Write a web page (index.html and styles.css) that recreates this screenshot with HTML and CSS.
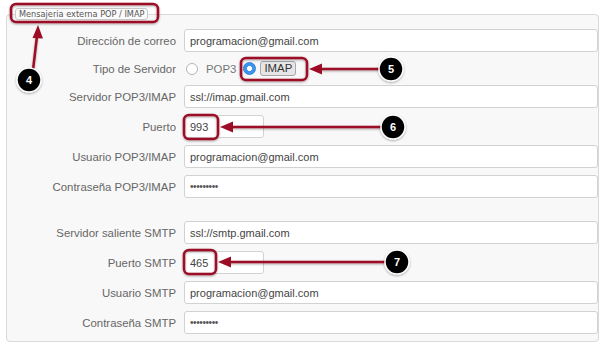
FILE: index.html
```html
<!DOCTYPE html>
<html lang="es">

<head>
    <meta charset="UTF-8">
    <meta name="viewport" content="width=device-width, initial-scale=1.0">
    <title>Mensajeria externa</title>
    <link rel="stylesheet" href="styles.css">
</head>

<body>
    <fieldset class="mail">
        <legend>Mensajeria externa POP / IMAP</legend>
        <div class="form">
            <label>Dirección de correo</label>
            <input type="text" value="programacion@gmail.com">

            <label class="radio-label">Tipo de Servidor</label>
            <div class="radios">
                <span class="radio"></span>
                <span class="opt">POP3</span>
                <span class="radio on"></span>
                <span class="opt sel">IMAP</span>
            </div>

            <label>Servidor POP3/IMAP</label>
            <input type="text" value="ssl://imap.gmail.com">

            <label>Puerto</label>
            <input type="text" class="short" value="993">

            <label>Usuario POP3/IMAP</label>
            <input type="text" value="programacion@gmail.com">

            <label>Contraseña POP3/IMAP</label>
            <input type="password" value="123456789">

            <div class="spacer"></div>

            <label>Servidor saliente SMTP</label>
            <input type="text" value="ssl://smtp.gmail.com">

            <label>Puerto SMTP</label>
            <input type="text" class="short" value="465">

            <label>Usuario SMTP</label>
            <input type="text" value="programacion@gmail.com">

            <label>Contraseña SMTP</label>
            <input type="password" value="123456789">
        </div>
    </fieldset>

    <!-- annotations -->
    <svg class="notes" width="600" height="347" viewBox="0 0 600 347">
        <defs>
            <filter id="sh" x="-20%" y="-20%" width="140%" height="140%">
                <feDropShadow dx="0" dy="1" stdDeviation="1" flood-color="#000" flood-opacity="0.35" />
            </filter>
        </defs>
        <g fill="none" stroke="#9c0d25" stroke-width="2.5" filter="url(#sh)">
            <rect x="11" y="4" width="147" height="18" rx="5" />
            <rect x="241" y="58" width="66" height="22" rx="5" />
            <rect x="184" y="115" width="34" height="24" rx="5" />
            <rect x="184" y="250" width="32" height="24" rx="5" />
            <line x1="33" y1="70" x2="37" y2="36" />
            <line x1="380" y1="69" x2="321" y2="69" />
            <line x1="382" y1="127" x2="231" y2="127" />
            <line x1="386" y1="262" x2="229" y2="262" />
        </g>
        <g fill="#9c0d25">
            <polygon points="38,25 32.5,38 43,38.5" />
            <polygon points="309,69 322,63.5 322,74.5" />
            <polygon points="220,127 233,121.5 233,132.5" />
            <polygon points="218,262 231,256.5 231,267.5" />
        </g>
        <g class="pin" filter="url(#sh)">
            <circle cx="29" cy="80" r="12" />
            <circle cx="391" cy="69" r="12" />
            <circle cx="393" cy="127" r="12" />
            <circle cx="397" cy="262" r="12" />
        </g>
        <g class="pin-num">
            <text x="29" y="84">4</text>
            <text x="391" y="73">5</text>
            <text x="393" y="131">6</text>
            <text x="397" y="266">7</text>
        </g>
    </svg>
</body>

</html>
```

FILE: styles.css
```css
body {
    margin: 0;
    background: #fff;
    font-family: "Liberation Sans", Arial, Helvetica, sans-serif;
    width: 600px;
    height: 347px;
    overflow: hidden;
    position: relative;
}

.mail {
    margin: 8px 0 0 6px;
    width: 592px;
    padding: 0 0 8px 0;
    border: 1px solid #d9d9d9;
    border-radius: 4px;
    background: #f8f8f8;
    box-sizing: border-box;
    height: 334px;
}

.mail>legend {
    margin-left: 8px;
    padding: 0 3px;
    height: 12px;
    line-height: 11px;
    box-sizing: border-box;
    font-family: "DejaVu Sans", Verdana, sans-serif;
    font-size: 8.2px;
    color: #555;
    background: #fbfbfb;
    border: 1px solid #c9c9c9;
    border-radius: 3px;
}

.form {
    display: grid;
    grid-template-columns: 169px 1fr;
    column-gap: 8px;
    row-gap: 7px;
    padding-top: 9px;
}

.form>label {
    align-self: center;
    text-align: right;
    font-size: 11.4px;
    color: #666;
}

.form>input {
    height: 23px;
    width: 414px;
    box-sizing: border-box;
    margin: 0;
    padding: 0 0 0 5px;
    border: 1px solid #d2d2d2;
    border-radius: 3px;
    background: #fff;
    font-family: "Liberation Sans", Arial, sans-serif;
    font-size: 11px;
    color: #444;
    outline: none;
}

.form>input.short {
    width: 80px;
}

.form>input[type="password"] {
    font-size: 10px;
    letter-spacing: -0.4px;
    color: #555;
}

.spacer {
    grid-column: 1 / -1;
    height: 9px;
}

.radios {
    height: 19px;
    display: flex;
    align-items: center;
    padding-left: 2px;
}

.radio {
    width: 12px;
    height: 12px;
    box-sizing: border-box;
    border: 1px solid #b5b5b5;
    border-radius: 50%;
    background: #fff;
    margin-right: 8px;
}

.radio.on {
    width: 13px;
    height: 13px;
    border: 1px solid #2f7fd8;
    background: radial-gradient(circle, #fff 0 2.2px, #3d94ee 2.8px);
    margin-right: 4px;
}

.opt {
    font-size: 11.4px;
    color: #777;
    margin-right: 7px;
}

.opt.sel {
    color: #333;
    background: #e6e6e6;
    border: 1px solid #a8a8a8;
    border-radius: 3px;
    padding: 0 3px;
    line-height: 13px;
}

.notes {
    position: absolute;
    left: 0;
    top: 0;
    pointer-events: none;
}

.pin circle {
    fill: #050505;
    stroke: #fff;
    stroke-width: 1.5;
}

.pin-num text {
    fill: #fff;
    font-family: "Liberation Sans", Arial, sans-serif;
    font-weight: bold;
    font-size: 11px;
    text-anchor: middle;
}
```
